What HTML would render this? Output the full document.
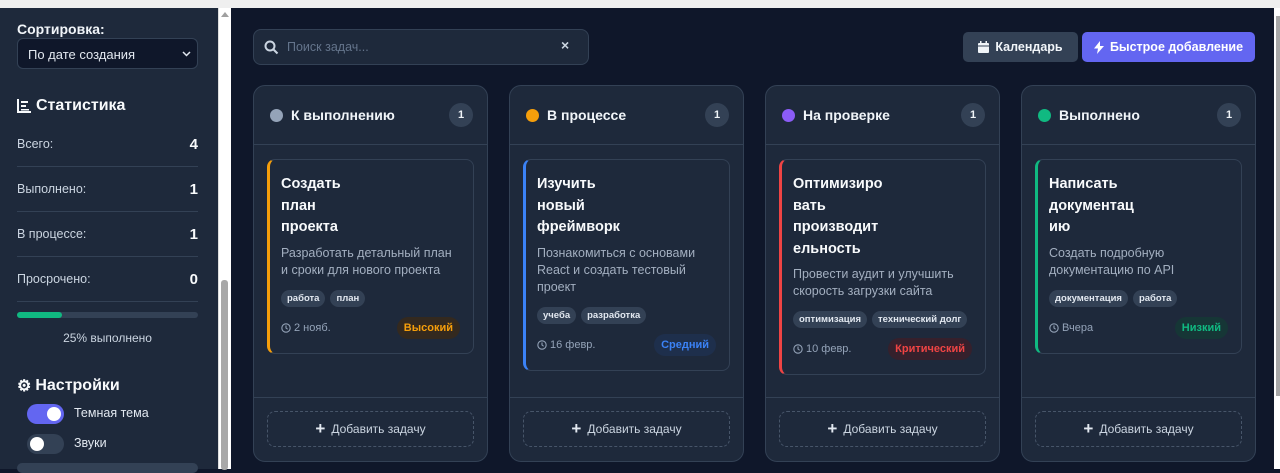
<!DOCTYPE html>
<html><head><meta charset="utf-8"><style>
*{box-sizing:border-box;margin:0;padding:0}
body{width:1280px;height:469px;overflow:hidden;background:#0f172a;font-family:"Liberation Sans","Noto Sans CJK SC",sans-serif;position:relative;color:#f1f5f9}
.abs{position:absolute}
.top{left:0;top:0;width:1280px;height:8px;background:#efefef}
.side{left:0;top:8px;width:218px;height:461px;background:#1e293b}
.sb{left:218px;top:8px;width:13px;height:461px;background:#fff;border-left:1px solid #ddd}
.rsb{left:1274px;top:8px;width:6px;height:461px;background:#fff}
.lbl{font-size:14px;font-weight:bold;color:#f1f5f9}
.sel{left:17px;top:38px;width:181px;height:31px;border:1px solid #334155;border-radius:6px;background:#0f172a;font-size:13px;color:#e2e8f0;padding:8px 10px}
.h3{font-size:16px;font-weight:bold;color:#f8fafc}
.row{left:17px;width:181px;height:45px;border-bottom:1px solid #334155;display:flex;justify-content:space-between;align-items:center;font-size:12.5px;color:#cbd5e1}
.row b{font-size:15px;color:#f8fafc}
.tog{width:37px;height:20px;border-radius:10px;left:27px}
.tog i{position:absolute;top:3px;width:14px;height:14px;border-radius:50%;background:#fff}
.col{top:85px;width:235px;height:377px;background:#1e293b;border:1px solid #334155;border-radius:12px}
.ch{height:59px;border-bottom:1px solid #334155;display:flex;align-items:center;padding:0 14px 0 16px}
.dot{width:13px;height:13px;border-radius:50%;margin-right:8px}
.ct{font-size:14px;font-weight:bold;flex:1}
.cnt{width:24px;height:24px;border-radius:50%;background:#334155;font-size:11px;font-weight:bold;display:flex;align-items:center;justify-content:center}
.card{position:absolute;left:13px;top:73px;width:207px;background:#1e293b;border:1px solid #334155;border-left:3px solid;border-radius:8px;padding:14px 13px 14px 11px}
.t{font-size:14.5px;font-weight:bold;line-height:21.5px;color:#f8fafc}
.d{font-size:12.5px;line-height:17px;color:#a3afc0;margin-top:6px}
.tags{margin-top:11px;display:flex;gap:5px;white-space:nowrap}
.tag{font-size:9.5px;font-weight:bold;background:#334155;color:#e2e8f0;border-radius:9px;height:17px;padding:0 6px;line-height:17px;white-space:nowrap}
.f{margin-top:10px;display:flex;justify-content:space-between;align-items:center;font-size:11px;color:#94a3b8}
.f span:first-child{display:flex;align-items:center;gap:3px}
.p{font-size:11px;font-weight:bold;border-radius:11px;height:22px;line-height:22px;padding:0 7px}
.add{position:absolute;left:13px;top:325px;width:207px;height:36px;border:1px dashed #475569;border-radius:8px;font-size:12px;color:#cbd5e1;display:flex;align-items:center;justify-content:center;gap:6px}
.add span{font-size:17px;font-weight:bold;color:#e2e8f0}
.foot{position:absolute;left:0;right:0;top:311px;border-top:1px solid #334155}
</style></head><body>
<svg width="0" height="0" style="position:absolute"><defs><symbol id="clk" viewBox="0 0 12 12"><circle cx="6" cy="6" r="5" stroke="#94a3b8" stroke-width="1.3" fill="none"/><path d="M6 3v3l2 1.5" stroke="#94a3b8" stroke-width="1.3" fill="none"/></symbol></defs></svg>
<div class="abs top"></div>
<div class="abs side"></div>
<div class="abs sb"><div class="abs" style="left:2px;top:272px;width:7px;height:190px;background:#a8a8a8;border-radius:3px"></div><div class="abs" style="left:2px;top:4px;width:0;height:0;border-left:4px solid transparent;border-right:4px solid transparent;border-bottom:5px solid #a0a0a0"></div></div>
<div class="abs rsb"><div class="abs" style="left:2px;top:8px;width:4px;height:380px;background:#a8a8a8"></div></div>

<div class="abs lbl" style="left:17px;top:21px">Сортировка:</div>
<div class="abs sel">По дате создания<svg class="abs" style="right:6px;top:12px" width="9" height="6" viewBox="0 0 9 6"><path d="M1 1l3.5 3.5L8 1" stroke="#e2e8f0" stroke-width="1.5" fill="none"/></svg></div>
<div class="abs h3" style="left:17px;top:97px;display:flex;align-items:center;gap:5px"><svg width="14" height="14" viewBox="0 0 14 14"><path d="M1 0v13h13" stroke="#f8fafc" stroke-width="2" fill="none"/><rect x="4" y="2" width="7" height="2" fill="#f8fafc"/><rect x="4" y="6" width="5" height="2" fill="#f8fafc"/><rect x="4" y="10" width="8" height="1.5" fill="#f8fafc"/></svg>Статистика</div>
<div class="abs row" style="top:122px"><span>Всего:</span><b>4</b></div>
<div class="abs row" style="top:167px"><span>Выполнено:</span><b>1</b></div>
<div class="abs row" style="top:212px"><span>В процессе:</span><b>1</b></div>
<div class="abs row" style="top:257px"><span>Просрочено:</span><b>0</b></div>
<div class="abs" style="left:17px;top:312px;width:181px;height:6px;border-radius:3px;background:#334155"><div style="width:45px;height:6px;border-radius:3px;background:#10b981"></div></div>
<div class="abs" style="left:17px;top:331px;width:181px;text-align:center;font-size:12px;color:#cbd5e1">25% выполнено</div>
<div class="abs h3" style="left:17px;top:376px;display:flex;align-items:center;gap:4px"><span style="font-size:16px">⚙</span>Настройки</div>
<div class="abs tog" style="top:404px;background:#6366f1"><i style="left:20px"></i></div>
<div class="abs" style="left:74px;top:406px;font-size:12.5px;color:#e2e8f0">Темная тема</div>
<div class="abs tog" style="top:434px;background:#334155"><i style="left:3px"></i></div>
<div class="abs" style="left:74px;top:436px;font-size:12.5px;color:#e2e8f0">Звуки</div>
<div class="abs" style="left:17px;top:463px;width:181px;height:10px;border-radius:6px;background:#334155"></div>

<div class="abs" style="left:253px;top:29px;width:336px;height:36px;background:#1e293b;border:1px solid #334155;border-radius:8px">
<svg class="abs" style="left:10px;top:10px" width="15" height="15" viewBox="0 0 15 15"><circle cx="6" cy="6" r="4.5" stroke="#cbd5e1" stroke-width="2" fill="none"/><path d="M9.5 9.5l4 4" stroke="#cbd5e1" stroke-width="2"/></svg>
<span class="abs" style="left:33px;top:10px;font-size:12.5px;color:#64748b">Поиск задач...</span>
<span class="abs" style="left:307px;top:7px;font-size:14px;color:#cbd5e1;font-weight:bold">×</span></div>
<div class="abs" style="left:963px;top:32px;width:115px;height:30px;background:#334155;border-radius:5px;font-size:12.5px;font-weight:bold;color:#f1f5f9;display:flex;align-items:center;justify-content:center;gap:6px"><svg width="11" height="12" viewBox="0 0 11 12"><rect x="0" y="2" width="11" height="10" rx="1" fill="#f1f5f9"/><rect x="2" y="0" width="1.5" height="3" fill="#f1f5f9"/><rect x="7.5" y="0" width="1.5" height="3" fill="#f1f5f9"/><path d="M0 5h11" stroke="#334155"/></svg>Календарь</div>
<div class="abs" style="left:1082px;top:32px;width:173px;height:30px;background:#6366f1;border-radius:5px;font-size:12.5px;font-weight:bold;color:#fff;display:flex;align-items:center;justify-content:center;gap:6px"><svg width="10" height="13" viewBox="0 0 10 13"><path d="M6 0L0 7.5h4L3 13l7-8H6z" fill="#fff"/></svg>Быстрое добавление</div>

<div class="abs col" style="left:253px"><div class="ch"><div class="dot" style="background:#94a3b8"></div><div class="ct">К выполнению</div><div class="cnt">1</div></div>
<div class="card" style="border-left-color:#f59e0b"><div class="t">Создать<br>план<br>проекта</div><div class="d">Разработать детальный план и сроки для нового проекта</div><div class="tags"><span class="tag">работа</span><span class="tag">план</span></div><div class="f"><span><svg width="10" height="10"><use href="#clk"/></svg>2 нояб.</span><span class="p" style="color:#f59e0b;background:#33291f">Высокий</span></div></div>
<div class="foot"></div><div class="add"><span>+</span>Добавить задачу</div></div>

<div class="abs col" style="left:509px"><div class="ch"><div class="dot" style="background:#f59e0b"></div><div class="ct">В процессе</div><div class="cnt">1</div></div>
<div class="card" style="border-left-color:#3b82f6"><div class="t">Изучить<br>новый<br>фреймворк</div><div class="d">Познакомиться с основами React и создать тестовый проект</div><div class="tags"><span class="tag">учеба</span><span class="tag">разработка</span></div><div class="f"><span><svg width="10" height="10"><use href="#clk"/></svg>16 февр.</span><span class="p" style="color:#3b82f6;background:#1e2f4c">Средний</span></div></div>
<div class="foot"></div><div class="add"><span>+</span>Добавить задачу</div></div>

<div class="abs col" style="left:765px"><div class="ch"><div class="dot" style="background:#8b5cf6"></div><div class="ct">На проверке</div><div class="cnt">1</div></div>
<div class="card" style="border-left-color:#ef4444"><div class="t">Оптимизиро<br>вать<br>производит<br>ельность</div><div class="d">Провести аудит и улучшить скорость загрузки сайта</div><div class="tags"><span class="tag">оптимизация</span><span class="tag">технический долг</span></div><div class="f"><span><svg width="10" height="10"><use href="#clk"/></svg>10 февр.</span><span class="p" style="color:#ef4444;background:#35202c">Критический</span></div></div>
<div class="foot"></div><div class="add"><span>+</span>Добавить задачу</div></div>

<div class="abs col" style="left:1021px"><div class="ch"><div class="dot" style="background:#10b981"></div><div class="ct">Выполнено</div><div class="cnt">1</div></div>
<div class="card" style="border-left-color:#10b981"><div class="t">Написать<br>документац<br>ию</div><div class="d">Создать подробную документацию по API</div><div class="tags"><span class="tag">документация</span><span class="tag">работа</span></div><div class="f"><span><svg width="10" height="10"><use href="#clk"/></svg>Вчера</span><span class="p" style="color:#10b981;background:#163636">Низкий</span></div></div>
<div class="foot"></div><div class="add"><span>+</span>Добавить задачу</div></div>
</body></html>
